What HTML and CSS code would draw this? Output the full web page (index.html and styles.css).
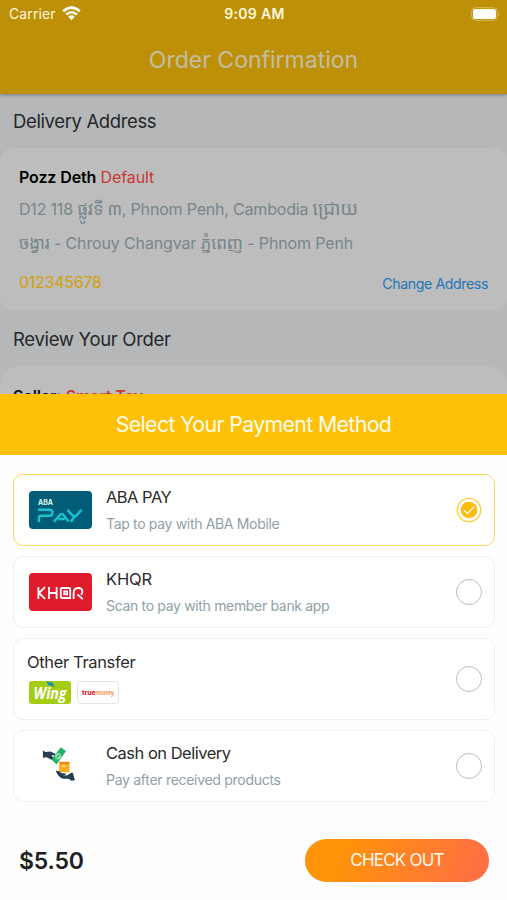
FILE: index.html
```html
<!DOCTYPE html>
<html lang="en">
<head>
<meta charset="utf-8">
<meta name="viewport" content="width=device-width, initial-scale=1">
<title>Order Confirmation</title>
<link rel="stylesheet" href="styles.css">
</head>
<body>
<div class="screen">
  <header class="topbar">
    <div class="status">
      <div class="carrier"><span>Carrier</span>
        <svg width="19" height="15" viewBox="0 0 19 15" fill="none" stroke="#fff" stroke-width="2.6"><path d="M1.2 5.2Q9.5-2 17.8 5.2M4.2 8.5Q9.5 4 14.8 8.5"/><path d="M6.2 10.7Q9.5 8 12.8 10.7L9.5 14.3Z" fill="#fff" stroke="none"/></svg>
      </div>
      <div class="time">9:09 AM</div>
      <svg class="battery" width="30" height="14" viewBox="0 0 30 14"><rect x=".7" y=".7" width="25.6" height="12.6" rx="4" fill="none" stroke="#d8b95f" stroke-width="1"/><rect x="2" y="2" width="23" height="10" rx="2.6" fill="#fff"/><path d="M27.6 4.8q2 2.2 0 4.4z" fill="#d8b95f"/></svg>
    </div>
    <h1 class="title">Order Confirmation</h1>
  </header>
  <main class="content">
    <h2 class="section">Delivery Address</h2>
    <section class="address">
      <p class="name"><b>Pozz Deth</b> <span class="red">Default</span></p>
      <p class="line line-one">D12 118 <span class="khmer">ផ្លូវទី ៣</span>, Phnom Penh, Cambodia <span class="khmer khmer-wide">ជ្រោយ</span></p>
      <p class="line line-two"><span class="khmer">ចង្វារ</span> - Chrouy Changvar <span class="khmer">ភ្នំពេញ</span> - Phnom Penh</p>
      <div class="contact"><span class="phone">012345678</span><a class="change">Change Address</a></div>
    </section>
    <h2 class="section review">Review Your Order</h2>
    <section class="order"><p class="seller"><b>Seller:</b> <span class="red">Smart Tov</span></p></section>
  </main>

  <div class="sheet">
    <h2 class="sheet-title">Select Your Payment Method</h2>
    <div class="methods">
      <div class="method selected">
        <div class="logo aba">
          <svg width="63" height="38" viewBox="0 0 63 38"><text x="9" y="14" textLength="15" class="aba-name">ABA</text><path d="M25 8.8h1" stroke="#d33" stroke-width="1"/><path d="M8.8 18.8H20.5q3 0 3 3t-3 3H12q-2.1 0-2.1 2.2V31M25 30.6l6-6.6q1.8-2 3.6 0l4.8 6.6M29.5 28h6M38.5 18.8l5 5.6q2 1.4 4 0l5-5.6M46 25l-4.2 5.8" fill="none" stroke="#1cc0ca" stroke-width="2.5" stroke-linejoin="round"/></svg>
        </div>
        <div class="copy"><h3 class="aba-title">ABA PAY</h3><p class="aba-note">Tap to pay with ABA Mobile</p></div>
        <svg class="radio" width="26" height="26" viewBox="0 0 26 26"><circle cx="13" cy="13" r="11.7" fill="none" stroke="#ffcc38" stroke-width="1.3"/><circle cx="13" cy="13" r="8.3" fill="#fdbb08"/><path d="m8 13.2 3.4 3.4 6.6-6.8" fill="none" stroke="#fff6cf" stroke-width="1.5"/></svg>
      </div>
      <div class="method">
        <div class="logo khqr">
          <svg width="63" height="38" viewBox="0 0 63 38" fill="none" stroke="#fff" stroke-width="1.8"><path d="M9.4 14v12M16 14.2l-6 5.8 6 5.8M20 14v12M27.6 14v12M20 20h7.6"/><path d="M40.5 25H33q-1.2 0-1.2-1.2v-7.6Q31.8 15 33 15h7q1.2 0 1.2 1.2V26"/><path d="M35.2 18.4h2.9v2.9h-2.9zM44.6 26v-5.6q0-5.4 4.5-5.4t4.3 4q0 1.8-1.6 2.6M48.4 21.4l5.4 4.8"/></svg>
        </div>
        <div class="copy"><h3 class="khqr-title">KHQR</h3><p class="khqr-note">Scan to pay with member bank app</p></div>
        <span class="radio ring"></span>
      </div>
      <div class="method other">
        <div class="copy"><h3 class="other-title">Other Transfer</h3>
          <div class="brands">
            <svg class="wing" width="42" height="23" viewBox="0 0 42 23"><text x="4.5" y="17.6" textLength="33" lengthAdjust="spacingAndGlyphs">Wing</text><path d="m17 .5 6.5 1.1 2.3 4.7-2.5-1.4-3.4-.4z" fill="#1292b0"/></svg>
            <svg class="truemoney" width="42" height="23" viewBox="0 0 42 23"><rect x=".5" y=".5" width="41" height="22" rx="3.5"/><text x="5" y="13.8" class="true" textLength="13.5" lengthAdjust="spacingAndGlyphs">true</text><text x="18.5" y="13.8" class="money" textLength="18.5" lengthAdjust="spacingAndGlyphs">money</text></svg>
          </div>
        </div>
        <span class="radio ring"></span>
      </div>
      <div class="method cash">
        <div class="cash-icon">
          <svg width="33" height="36" viewBox="0 0 33 36"><path d="m9.5 13.6 9.2-12.4 5.4 3.8-9.6 13.5z" fill="#21b466"/><circle cx="16.1" cy="10.2" r="3.1" fill="#8de0a9"/><path d="m17.1 8.7-2.1 2.8" stroke="#13854e"/><path d="M.9 4.6 3.5 6l5-.4 5.2 2.4-1.2 1.6-3.1-.7 1.9 2.8-1.8 2.1-4.8-2.5-3.8.4z" fill="#263d50"/><path d="M17.2 15.7h10.2v10.5H17.2z" fill="#f8ad1c"/><path d="M17.2 16h10.2v2.2H17.2z" fill="#e98c19"/><path d="M20 20h4" stroke="#ffe2a0" stroke-width="1.3"/><path d="m13.7 24.7 3.1.2 2.8 2.4 4.1.2-.3 1.4-3 .4 4.6.2 4.6-3.1 1.3.5 2 7.3-3.6.6-2.6-2h-5.3q-4.8-.8-7.7-8.1z" fill="#263d50"/></svg>
        </div>
        <div class="copy"><h3 class="cash-title">Cash on Delivery</h3><p class="cash-note">Pay after received products</p></div>
        <span class="radio ring"></span>
      </div>
    </div>
    <footer class="checkout"><strong>$5.50</strong><button>CHECK OUT</button></footer>
  </div>
</div>
</body>
</html>
```
FILE: styles.css
```css
* { box-sizing: border-box; }
body, h1, h2, h3, p { margin: 0; }
body { font-family: Inter, "Liberation Sans", sans-serif; color: #252525; overflow: hidden; background: #fff; }
h1, h2, h3 { font-weight: 400; }
p, h1, h2, h3, a, button, strong, .phone { white-space: nowrap; }
.screen { position: relative; width: 507px; height: 900px; overflow: hidden; background: #b5b7b9; }
.topbar { position: relative; height: 94px; background: #bd9007; box-shadow: 0 1px 3px #77777b; }
.status { display: grid; grid-template-columns: 1fr auto 1fr; height: 27px; align-items: center; padding: 0 6px 0 9px; color: #fff8dc; font-size: 14px; }
.carrier { display: flex; gap: 6px; align-items: center; letter-spacing: .1px; }
.time { font-weight: 600; letter-spacing: .35px; margin-right: 1px; }
.battery { justify-self: end; }
.title { padding-top: 16px; text-align: center; font-size: 23px; line-height: 34px; letter-spacing: 0; color: #c3bda6; }
.section { height: 54px; padding: 0 13px; font-size: 18.5px; line-height: 55px; letter-spacing: -.37px; color: #252728; }
.address { height: 163px; padding: 17px 19px 0; border-radius: 14px; background: #bdbdbd; }
.name { height: 27px; font-size: 16px; line-height: 24px; letter-spacing: -.12px; }
.name b { font-weight: 600; color: #000; }
.red { color: #c83935; }
.line { height: 34px; font-size: 16px; line-height: 34px; letter-spacing: -.19px; color: #77858b; }
.line-two { letter-spacing: -.14px; }
.khmer { font-family: "Noto Sans Khmer", "Khmer OS", "DejaVu Sans", sans-serif; font-size: 17px; line-height: 1; }
.khmer-wide { font-size: 18.7px; }
.contact { display: flex; align-items: center; justify-content: space-between; height: 44px; }
.phone { color: #d2a009; font-size: 16px; line-height: 40px; letter-spacing: -.25px; }
.change { margin-top: 3px; color: #2276b8; font-size: 14.2px; letter-spacing: -.42px; }
.review { height: 55px; line-height: 56px; letter-spacing: -.31px; }
.order { height: 80px; padding: 18px 13px; border-radius: 20px; background: #bdbdbd; }
.seller { font-size: 16px; line-height: 24px; letter-spacing: -.12px; }
.seller b { color: #111; font-weight: 600; }
.seller .red { font-weight: 600; }
.sheet { position: absolute; left: 0; right: 0; top: 394px; bottom: 0; background: #fefefe; }
.sheet-title { height: 61px; background: #ffc107; color: #fffdf0; font-size: 21.3px; line-height: 61px; text-align: center; letter-spacing: -.63px; }
.methods { display: flex; flex-direction: column; gap: 10px; padding: 19px 12px 0 13px; }
.method { display: flex; align-items: center; height: 72px; padding: 0 12px 0 15px; border: 1px solid #eeeff1; border-radius: 10px; background: #fff; }
.method.selected { border-color: #ffd760; }
.method.other { height: 82px; padding-left: 13px; }
.logo { width: 63px; height: 38px; flex: none; border-radius: 4px; margin-right: 14px; }
.aba { background: #005c77; }
.khqr { background: #e01b2c; }
.aba-name { font: bold 7px Inter, sans-serif; fill: #e3f6ee; }
.copy { flex: 1; min-width: 0; }
.copy h3 { font-size: 16.5px; line-height: 24px; color: #2b2b2b; }
.copy .aba-title { letter-spacing: -.53px; }
.copy .khqr-title { letter-spacing: -.15px; }
.copy .other-title { letter-spacing: -.36px; }
.copy .cash-title { letter-spacing: -.5px; }
.copy p { margin-top: 3px; font-size: 14px; line-height: 24px; letter-spacing: -.33px; color: #91a0a6; }
.copy .cash-note { letter-spacing: -.29px; }
.radio { flex: none; width: 26px; height: 26px; }
.ring { border: 1px solid #bcbcbc; border-radius: 50%; }
.other .copy { padding-bottom: 5px; }
.brands { display: flex; gap: 6px; margin: 7px 0 0 2px; }
.brands svg { display: block; }
.wing { background: #a3cc13; border-radius: 3px; }
.wing text { font: italic bold 16.5px "Open Sans", sans-serif; fill: #fff; }
.truemoney rect { fill: #fff; stroke: #e4e4e4; }
.truemoney text { font: 800 6.8px Inter, sans-serif; }
.truemoney .money { font-weight: 600; }
.true { fill: #d72b32; }
.money { fill: #f68a36; }
.cash-icon { width: 77px; padding-left: 13px; flex: none; }
.checkout { display: flex; align-items: center; justify-content: space-between; padding: 37px 18px 0 19px; }
.checkout strong { font-size: 23px; font-weight: 600; letter-spacing: -.2px; color: #202020; }
.checkout button { width: 184px; height: 43px; padding: 0 0 1px; border: 0; border-radius: 22px; background: linear-gradient(115deg, #ff9408 18%, #ff7043 92%); color: #fff8ec; font: 17px Inter, sans-serif; letter-spacing: -.78px; }
```
